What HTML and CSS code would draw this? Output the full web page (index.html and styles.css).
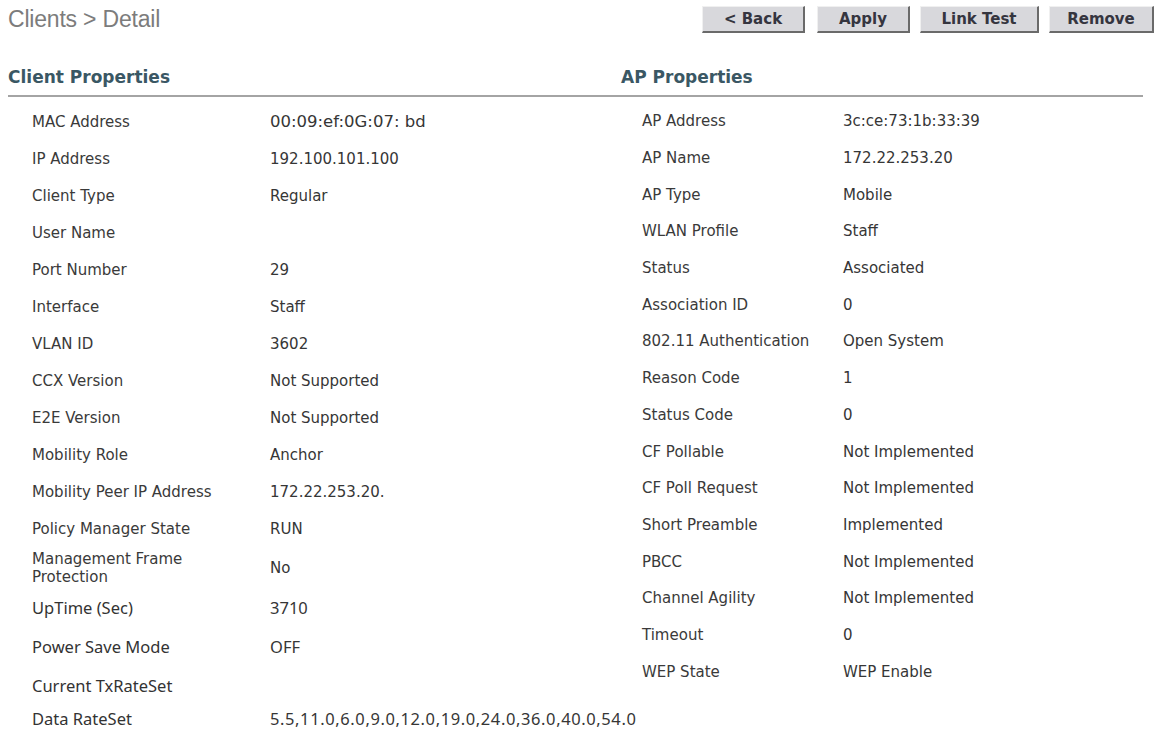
FILE: index.html
```html
<!DOCTYPE html>
<html lang="en">
<head>
    <meta charset="UTF-8">
    <meta name="viewport" content="width=device-width, initial-scale=1.0">
    <title>Clients &gt; Detail</title>
    <link rel="stylesheet" href="styles.css">
</head>
<body>
    <div class="top-bar">
        <div class="page-title">Clients &gt; Detail</div>
        <div class="buttons">
            <a href="javascript:;" class="btn btn-back">&lt; Back</a>
            <a href="javascript:;" class="btn btn-apply">Apply</a>
            <a href="javascript:;" class="btn btn-link">Link Test</a>
            <a href="javascript:;" class="btn btn-remove">Remove</a>
        </div>
    </div>

    <div class="content">
        <!-- 左邊 client -->
        <div class="panel panel-client">
            <div class="panel-title">Client Properties</div>
            <div class="panel-body">
                <div class="row"><span class="label">MAC Address</span><span class="value value-mac">00:09:ef:0G:07: bd</span></div>
                <div class="row"><span class="label">IP Address</span><span class="value">192.100.101.100</span></div>
                <div class="row"><span class="label">Client Type</span><span class="value">Regular</span></div>
                <div class="row"><span class="label">User Name</span><span class="value"></span></div>
                <div class="row"><span class="label">Port Number</span><span class="value">29</span></div>
                <div class="row"><span class="label">Interface</span><span class="value">Staff</span></div>
                <div class="row"><span class="label">VLAN ID</span><span class="value">3602</span></div>
                <div class="row"><span class="label">CCX Version</span><span class="value">Not Supported</span></div>
                <div class="row"><span class="label">E2E Version</span><span class="value">Not Supported</span></div>
                <div class="row"><span class="label">Mobility Role</span><span class="value">Anchor</span></div>
                <div class="row"><span class="label">Mobility Peer IP Address</span><span class="value">172.22.253.20.</span></div>
                <div class="row"><span class="label">Policy Manager State</span><span class="value">RUN</span></div>
                <div class="row row-tall"><span class="label">Management Frame<br>Protection</span><span class="value">No</span></div>
                <div class="row row-big"><span class="label">UpTime (Sec)</span><span class="value">3710</span></div>
                <div class="row row-big"><span class="label">Power Save Mode</span><span class="value">OFF</span></div>
                <div class="row row-big"><span class="label">Current TxRateSet</span><span class="value"></span></div>
                <div class="row row-big row-last"><span class="label">Data RateSet</span><span class="value rate-set">5.5,11.0,6.0,9.0,12.0,19.0,24.0,36.0,40.0,54.0</span></div>
            </div>
        </div>

        <!-- 右邊 AP -->
        <div class="panel panel-ap">
            <div class="panel-title">AP Properties</div>
            <div class="panel-body">
                <div class="row"><span class="label">AP Address</span><span class="value">3c:ce:73:1b:33:39</span></div>
                <div class="row"><span class="label">AP Name</span><span class="value">172.22.253.20</span></div>
                <div class="row"><span class="label">AP Type</span><span class="value">Mobile</span></div>
                <div class="row"><span class="label">WLAN Profile</span><span class="value">Staff</span></div>
                <div class="row"><span class="label">Status</span><span class="value">Associated</span></div>
                <div class="row"><span class="label">Association ID</span><span class="value">0</span></div>
                <div class="row"><span class="label">802.11 Authentication</span><span class="value">Open System</span></div>
                <div class="row"><span class="label">Reason Code</span><span class="value">1</span></div>
                <div class="row"><span class="label">Status Code</span><span class="value">0</span></div>
                <div class="row"><span class="label">CF Pollable</span><span class="value">Not Implemented</span></div>
                <div class="row"><span class="label">CF Poll Request</span><span class="value">Not Implemented</span></div>
                <div class="row"><span class="label">Short Preamble</span><span class="value">Implemented</span></div>
                <div class="row"><span class="label">PBCC</span><span class="value">Not Implemented</span></div>
                <div class="row"><span class="label">Channel Agility</span><span class="value">Not Implemented</span></div>
                <div class="row"><span class="label">Timeout</span><span class="value">0</span></div>
                <div class="row"><span class="label">WEP State</span><span class="value">WEP Enable</span></div>
            </div>
        </div>
    </div>
</body>
</html>
```

FILE: styles.css
```css
* {
    padding: 0;
    margin: 0;
    box-sizing: border-box;
}

body {
    background: #ffffff;
    color: #333333;
    font-family: "DejaVu Sans", Verdana, sans-serif;
    font-size: 15px;
    width: 1169px;
    height: 735px;
    overflow: hidden;
}

a {
    text-decoration: none;
    color: #35353f;
}

.top-bar {
    display: flex;
    justify-content: space-between;
    align-items: center;
    height: 39px;
    padding: 0 15px 0 8px;
}

.page-title {
    font-family: "Liberation Sans", Arial, sans-serif;
    font-size: 23px;
    letter-spacing: -0.2px;
    color: #7c7c7c;
    line-height: 1;
}

.buttons {
    display: flex;
    gap: 10px;
}

.btn {
    display: block;
    height: 27px;
    line-height: 24px;
    text-align: center;
    font-weight: bold;
    font-size: 15px;
    background: #d8d8dc;
    border-top: 1px solid #f0f0f0;
    border-left: 1px solid #f0f0f0;
    border-right: 2px solid #6a6a6a;
    border-bottom: 2px solid #6a6a6a;
}

.btn-back { width: 103px; margin-right: 2px; }
.btn-apply { width: 93px; }
.btn-link { width: 119px; }
.btn-remove { width: 105px; }

.content {
    display: flex;
    padding-left: 8px;
}

.panel-client {
    width: 613px;
}

.panel-ap {
    width: 522px;
}

.panel-title {
    font-weight: bold;
    font-size: 17px;
    color: #3a5764;
    line-height: 20px;
    padding-top: 28px;
    padding-bottom: 8px;
    border-bottom: 2px solid #a4a4a4;
}

.panel-body {
    padding-top: 6px;
}

.row {
    display: flex;
    align-items: center;
    height: 37px;
}

.panel-client .row {
    padding-left: 24px;
}

.panel-client .label {
    width: 238px;
}

.panel-ap .row {
    height: 36.7px;
    padding-left: 21px;
}

.panel-ap .label {
    width: 201px;
}

.label {
    color: #3a3a3a;
    flex-shrink: 0;
}

.value {
    color: #363636;
}

.value-mac {
    font-size: 16.5px;
}

.row-tall {
    height: 41px;
    line-height: 18px;
}

.row-big {
    height: 39px;
    font-family: "Noto Sans", "Open Sans", sans-serif;
    font-size: 16.5px;
}

.row-big .label {
    color: #333333;
}

.row-last {
    height: 27px;
}

.rate-set {
    letter-spacing: 0.6px;
}
```
